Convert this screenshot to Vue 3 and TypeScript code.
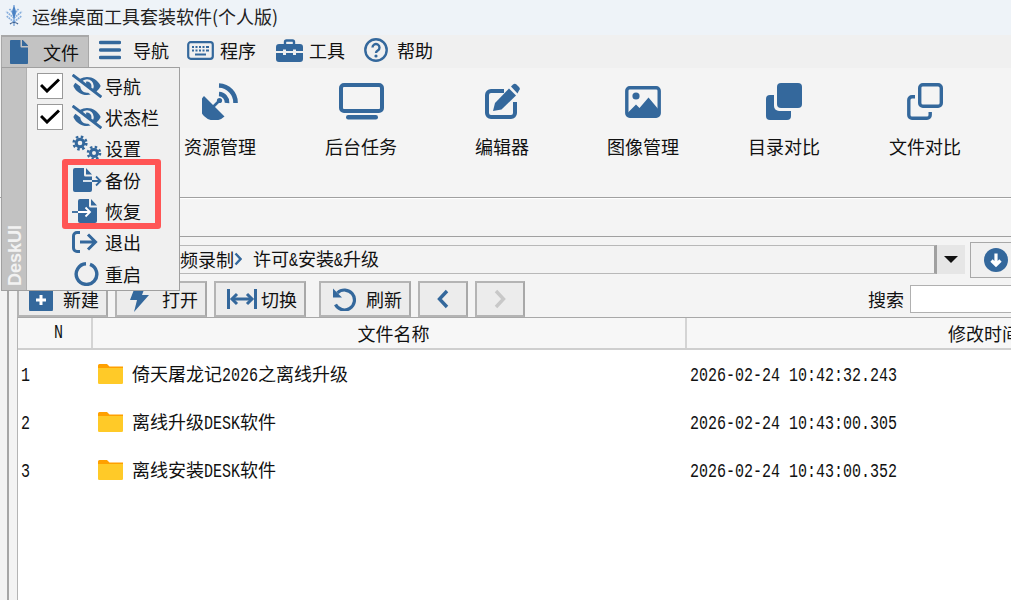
<script setup lang="ts">
const rows = [
  { n: 1, parts: [['倚天屠龙记', false], ['2026', true], ['之离线升级', false]], time: '2026-02-24 10:42:32.243' },
  { n: 2, parts: [['离线升级', false], ['DESK', true], ['软件', false]], time: '2026-02-24 10:43:00.305' },
  { n: 3, parts: [['离线安装', false], ['DESK', true], ['软件', false]], time: '2026-02-24 10:43:00.352' },
] as const
const filePath = 'M224 136V0H24C10.7 0 0 10.7 0 24v464c0 13.3 10.7 24 24 24h336c13.3 0 24-10.7 24-24V160H248c-13.2 0-24-10.8-24-24zm160-14.1v6.1H256V0h6.1c6.4 0 12.5 2.5 17 7l97.9 98c4.5 4.5 7 10.6 7 16.9z'
const eyePath = 'M320 400c-75.85 0-137.25-58.71-142.9-133.11L72.2 185.82c-13.79 17.3-26.48 35.59-36.72 55.59a32.35 32.35 0 0 0 0 29.19C89.71 376.41 197.07 448 320 448c26.91 0 52.87-4 77.89-10.46L346 397.39a144.13 144.13 0 0 1-26 2.61zm313.82 58.1l-110.55-85.44a331.25 331.25 0 0 0 81.25-102.07 32.35 32.35 0 0 0 0-29.19C550.29 135.59 442.93 64 320 64a308.15 308.15 0 0 0-147.32 37.7L45.46 3.37A16 16 0 0 0 23 6.18L3.37 31.45A16 16 0 0 0 6.18 53.9l588.36 454.73a16 16 0 0 0 22.46-2.81l19.64-25.27a16 16 0 0 0-2.82-22.45zm-183.72-142l-39.3-30.38A94.75 94.75 0 0 0 416 256a94.76 94.76 0 0 0-121.31-92.21A47.65 47.65 0 0 1 304 192a46.64 46.64 0 0 1-1.54 10l-73.61-56.89A142.31 142.31 0 0 1 320 112a143.92 143.92 0 0 1 144 144c0 21.63-5.29 41.79-13.9 60.11z'
const smallFile = 'M1 3a2 2 0 0 1 2-2h9v7a1.5 1.5 0 0 0 1.5 1.5H20V23a2 2 0 0 1-2 2H3a2 2 0 0 1-2-2zM14 1l6 6.5h-6z'
</script>

<template>
  <div class="app">
    <header class="titlebar">
      <svg class="logo" width="18" height="22" viewBox="0 0 18 22">
        <g stroke="#86aedd" stroke-width="1.7" fill="none" stroke-dasharray="1.8 .7">
          <path d="M9 17L1.500 11M9 17L16.500 11M9 13L1 6.500M9 13L17 6.500M9 9L4 3.500M9 9L14 3.500" />
        </g>
        <path d="M9 0V21" stroke="#5b8fcf" stroke-width="1.100" />
        <path d="M9 1C11 5 12 8 9 13C6 8 7 5 9 1Z" fill="#4a82c4" />
        <path d="M5 19C7 17 11 17 13 19" stroke="#3c5f8e" stroke-width="1.200" fill="none" />
      </svg>
      <span>运维桌面工具套装软件(个人版)</span>
    </header>

    <nav class="menubar">
      <div class="menu-file">
        <svg width="18" height="24" viewBox="0 0 384 512"><path :d="filePath" /></svg>
        <span>文件</span>
      </div>
      <div class="menu-item wide">
        <svg width="22" height="20" viewBox="0 0 22 20"><path d="M1.5 2.5H20.5M1.5 10H20.5M1.5 17.5H20.5" stroke-width="3.4" stroke-linecap="round" class="line" /></svg>
        <span>导航</span>
      </div>
      <div class="menu-item kbd">
        <svg width="27" height="19" viewBox="0 0 27 19">
          <rect x="1.2" y="1.2" width="24.6" height="16.6" rx="2.5" class="line" stroke-width="2.2" />
          <path d="M5 6H7M8.5 6H10.5M12 6H14M15.5 6H17.500M19 6H22M5 9.500H7M8.500 9.500H10.500M12 9.500H14M15.500 9.500H17.500M19 9.500H22M8 13.500H19" class="line" stroke-width="1.800" />
        </svg>
        <span>程序</span>
      </div>
      <div class="menu-item box">
        <svg width="27" height="23" viewBox="0 0 27 23">
          <path d="M9 5V3a1.500 1.500 0 0 1 1.500-1.500h6A1.500 1.500 0 0 1 18 3v2" class="line" stroke-width="2.400" />
          <path d="M0 8a3 3 0 0 1 3-3h21a3 3 0 0 1 3 3v4h-7v-1.500h-3V12h-7v-1.500H7V12H0z" />
          <path d="M0 14h7v2h3v-2h7v2h3v-2h7v6a3 3 0 0 1-3 3H3a3 3 0 0 1-3-3z" />
        </svg>
        <span>工具</span>
      </div>
      <div class="menu-item help">
        <svg width="24" height="24" viewBox="0 0 24 24">
          <circle cx="12" cy="12" r="10.700" class="line" stroke-width="2.400" />
          <path d="M8.500 9.500a3.500 3.500 0 1 1 5.300 3c-1.300.8-1.800 1.300-1.800 2.500" class="line" stroke-width="2.400" />
          <circle cx="12" cy="18" r="1.600" />
        </svg>
        <span>帮助</span>
      </div>
    </nav>

    <section class="ribbon">
      <div class="tool">
        <div class="tool-icon">
          <svg width="36" height="37" viewBox="0 0 36 37">
            <path d="M2 13L22.500 33.500A14.500 14.500 0 0 1 2 13Z" />
            <path d="M11 24L17 18" class="line" stroke-width="2.600" />
            <circle cx="17.500" cy="17.500" r="2.600" />
            <path d="M17 2.500A17 17 0 0 1 33.500 20M17 11A8.500 8.500 0 0 1 25 20" class="line" stroke-width="4.600" />
          </svg>
        </div>
        <span>资源管理</span>
      </div>
      <div class="tool">
        <div class="tool-icon">
          <svg width="45" height="37" viewBox="0 0 45 37">
            <rect x="2" y="2" width="41" height="26" rx="3" class="line" stroke-width="4" />
            <rect x="7" y="32" width="32" height="4.500" rx="2.200" />
          </svg>
        </div>
        <span>后台任务</span>
      </div>
      <div class="tool">
        <div class="tool-icon">
          <svg width="36" height="37" viewBox="0 0 36 37">
            <path d="M20 8H7a4 4 0 0 0-4 4V30a4 4 0 0 0 4 4H27a4 4 0 0 0 4-4V19" class="line" stroke-width="4" />
            <path d="M9 28L11 20L25 5.500L32 12.500L17.500 26.500Z" />
            <path d="M27 3.500L29 1.500a2.500 2.500 0 0 1 3.500 0L35 4a2.500 2.500 0 0 1 0 3.500L33.500 10.500Z" />
          </svg>
        </div>
        <span>编辑器</span>
      </div>
      <div class="tool">
        <div class="tool-icon">
          <svg class="img-icon" width="36" height="32" viewBox="0 0 36 32">
            <rect x="1.800" y="1.800" width="32.400" height="28.400" rx="3" class="line" stroke-width="3.400" />
            <circle cx="11" cy="10" r="3.600" />
            <path d="M2.500 27L11 18.500L14.500 22L23.500 11.500L34 24V29H3Z" />
          </svg>
        </div>
        <span>图像管理</span>
      </div>
      <div class="tool">
        <div class="tool-icon">
          <svg width="36" height="37" viewBox="0 0 36 37">
            <rect x="0" y="12" width="25" height="25" rx="4" />
            <rect x="8" y="-3" width="31" height="31" rx="5" class="cut" />
            <rect x="11" y="0" width="25" height="25" rx="4" />
          </svg>
        </div>
        <span>目录对比</span>
      </div>
      <div class="tool">
        <div class="tool-icon">
          <svg width="36" height="37" viewBox="0 0 36 37">
            <path d="M8 13.700H5a3.200 3.200 0 0 0-3.200 3.200V32a3.200 3.200 0 0 0 3.200 3.200H20a3.200 3.200 0 0 0 3.200-3.200V29" class="line" stroke-width="3.400" />
            <rect x="12.700" y="1.700" width="21.600" height="21.600" rx="3.200" class="line" stroke-width="3.400" />
          </svg>
        </div>
        <span>文件对比</span>
      </div>
    </section>

    <div class="body">
      <div class="gutter"><i class="gutter-rule"></i></div>
      <main class="main">
        <div class="tabstrip"></div>
        <div class="crumbs">
          <div class="crumb-box">
            <span>视频录制</span>
            <svg width="8" height="14" viewBox="0 0 8 14"><path d="M1.500 1.500L6.500 7L1.500 12.500" class="line" stroke-width="2.400" /></svg>
            <span class="crumb-last">许可<span class="mono amp">&amp;</span>安装<span class="mono amp">&amp;</span>升级</span>
          </div>
          <div class="crumb-drop"><b></b></div>
          <div class="crumb-go">
            <svg width="24" height="24" viewBox="0 0 24 24">
              <circle cx="12" cy="12" r="12" />
              <path d="M12 5.500V17M7.500 12.500L12 17L16.500 12.500" stroke="#fff" stroke-width="3.200" fill="none" />
            </svg>
          </div>
        </div>
        <div class="actions">
          <button class="btn b-new" type="button">
            <svg width="24" height="24" viewBox="0 0 24 24">
              <rect width="24" height="24" y="1" rx="3" />
              <path d="M12 8V18M7 13H17" stroke="#fff" stroke-width="3" />
            </svg>
            <span>新建</span>
          </button>
          <button class="btn b-open" type="button">
            <svg width="19" height="25" viewBox="0 0 19 25"><path d="M5 0H15L12 8H19L4 25L7 13H0Z" /></svg>
            <span>打开</span>
          </button>
          <button class="btn b-switch" type="button">
            <svg width="30" height="20" viewBox="0 0 30 20">
              <path d="M1.500 0V20M28.500 0V20M5 10H25" class="line" stroke-width="3" />
              <path d="M10 5L5 10L10 15M20 5L25 10L20 15" class="line" stroke-width="3" />
            </svg>
            <span>切换</span>
          </button>
          <button class="btn b-refresh" type="button">
            <svg width="24" height="24" viewBox="0 0 24 24">
              <path d="M5.500 5.800A10 10 0 1 1 3.500 17.500" class="line" stroke-width="3.200" />
              <path d="M1 1.500V10.500H10Z" />
            </svg>
            <span>刷新</span>
          </button>
          <button class="btn b-nav" type="button">
            <svg width="12" height="20" viewBox="0 0 12 20"><path d="M10 2L2.500 10L10 18" class="line" stroke-width="3.400" /></svg>
          </button>
          <button class="btn b-nav" type="button">
            <svg width="12" height="20" viewBox="0 0 12 20"><path d="M2 2L9.500 10L2 18" fill="none" stroke="#c8c8c8" stroke-width="3.400" /></svg>
          </button>
          <div class="search">
            <label for="q">搜索</label>
            <input id="q" type="text" />
          </div>
        </div>
        <div class="table">
          <div class="thead">
            <div class="th c-n"><span class="mono">N</span></div>
            <div class="th c-name">文件名称</div>
            <div class="th c-time">修改时间</div>
          </div>
          <div v-for="r in rows" :key="r.n" class="tr">
            <div class="td c-n-cell"><span class="mono">{{ r.n }}</span></div>
            <div class="td c-name-cell">
              <svg width="25" height="20" viewBox="0 0 25 20">
                <path d="M0 1.500a1.500 1.500 0 0 1 1.500-1.500H9l2.500 2.500H25V6H0Z" fill="#ffa000" />
                <path d="M0 4H25V18.700a1.300 1.300 0 0 1-1.300 1.300H1.300A1.300 1.300 0 0 1 0 18.700Z" fill="#ffca28" />
              </svg>
              <span class="fname"><template v-for="(p, i) in r.parts" :key="i"><span v-if="p[1]" class="mono run">{{ p[0] }}</span><template v-else>{{ p[0] }}</template></template></span>
            </div>
            <div class="td c-time-cell"><span class="mono">{{ r.time }}</span></div>
          </div>
        </div>
      </main>
    </div>

    <aside class="popup">
      <div class="strip"><span>DeskUI</span></div>
      <ul class="popup-list">
        <li>
          <span class="check"><svg width="20" height="15" viewBox="0 0 20 15"><path d="M1 7L7 13L19 1.500" fill="none" stroke="#000" stroke-width="3" /></svg></span>
          <svg class="pi" width="30" height="24" viewBox="0 0 640 512"><path :d="eyePath" /></svg>
          <span>导航</span>
        </li>
        <li>
          <span class="check"><svg width="20" height="15" viewBox="0 0 20 15"><path d="M1 7L7 13L19 1.500" fill="none" stroke="#000" stroke-width="3" /></svg></span>
          <svg class="pi" width="30" height="24" viewBox="0 0 640 512"><path :d="eyePath" /></svg>
          <span>状态栏</span>
        </li>
        <li>
          <span class="check none"></span>
          <svg class="pi" width="30" height="26" viewBox="0 0 30 26">
            <circle cx="8" cy="8" r="3.800" class="line" stroke-width="3" />
            <circle cx="8" cy="8" r="6.300" class="line" stroke-width="2.600" stroke-dasharray="2.500 2.450" />
            <circle cx="22" cy="18" r="3.500" class="line" stroke-width="3" />
            <circle cx="22" cy="18" r="6" class="line" stroke-width="2.600" stroke-dasharray="2.400 2.310" />
          </svg>
          <span>设置</span>
        </li>
        <li>
          <span class="check none"></span>
          <svg class="pi" width="30" height="26" viewBox="0 0 30 26">
            <path :d="smallFile" />
            <path d="M11 14H22" stroke="#fff" stroke-width="1.600" />
            <path d="M20 14H28M24 9.500L28.500 14L24 18.500" class="line" stroke-width="1.800" />
          </svg>
          <span>备份</span>
        </li>
        <li>
          <span class="check none"></span>
          <svg class="pi" width="30" height="26" viewBox="0 0 30 26">
            <path :d="smallFile" transform="translate(5 0)" />
            <path d="M0 14H7" class="line" stroke-width="1.800" />
            <path d="M6 14H18M13.500 9.500L18 14L13.500 18.500" stroke="#fff" stroke-width="1.800" fill="none" />
          </svg>
          <span>恢复</span>
        </li>
        <li>
          <span class="check none"></span>
          <svg class="pi" width="30" height="22" viewBox="0 0 30 22">
            <path d="M8 1.500H5a3.500 3.500 0 0 0-3.500 3.500V17A3.500 3.500 0 0 0 5 20.500H8" class="line" stroke-width="3" />
            <path d="M8 11H23M16 3.500L23.500 11L16 18.500" class="line" stroke-width="3" />
          </svg>
          <span>退出</span>
        </li>
        <li>
          <span class="check none"></span>
          <svg class="pi" width="30" height="24" viewBox="0 0 30 24">
            <path d="M14 1.800A10.300 10.300 0 1 0 18 2.400" class="line" stroke-width="3.400" />
          </svg>
          <span>重启</span>
        </li>
      </ul>
      <div class="highlight"></div>
    </aside>
  </div>
</template>

<style>
html, body { margin: 0; background: #fff; overflow: hidden; }
</style>

<style scoped>
.app {
  position: relative;
  width: 1011px;
  height: 600px;
  overflow: hidden;
  display: flex;
  flex-direction: column;
  font-family: "Noto Sans CJK SC", "Noto Sans", sans-serif;
  font-size: 18px;
  line-height: 24px;
  color: #111;
  background: #fff;
}
svg { display: block; flex: none; fill: #34689c; }
.line { fill: none; stroke: #34689c; }
.cut { fill: #f4f4f4; }
.mono {
  display: inline-block;
  font-family: "Liberation Mono", monospace;
  font-size: 20px;
  line-height: 24px;
  white-space: pre;
  transform: scaleX(0.75);
  transform-origin: 0 50%;
}
.mono.run { margin-right: -12px; }
.mono.amp { margin-right: -3px; }

.titlebar {
  height: 35px;
  flex: none;
  display: flex;
  align-items: center;
  padding: 0 0 4px 5px;
  gap: 9px;
  background: #eef3f8;
  box-sizing: border-box;
  color: #222;
}

.menubar {
  height: 33px;
  flex: none;
  display: flex;
  align-items: stretch;
  background: #f0f0f0;
}
.menu-file {
  margin-left: 1px;
  width: 88px;
  box-sizing: border-box;
  display: flex;
  align-items: center;
  gap: 15px;
  padding: 0 0 2px 8px;
  background: #c3c3c3;
  border-top: 2px solid #a8a8a8;
  border-left: 1px solid #a8a8a8;
  border-right: 1px solid #a8a8a8;
}
.menu-item { display: flex; align-items: center; gap: 6px; margin-left: 19px; padding-bottom: 3px; }
.menu-item.wide { gap: 12px; margin-left: 10px; }
.menu-item.kbd { margin-left: 18px; }
.menu-item.box { margin-left: 20px; }
.menu-item.help { gap: 9px; }

.ribbon {
  height: 130px;
  flex: none;
  box-sizing: border-box;
  display: flex;
  padding-left: 149.500px;
  background: #f4f4f4;
  border-bottom: 1px solid #a0a0a0;
}
.tool {
  width: 141px;
  display: flex;
  flex-direction: column;
  align-items: center;
}
.tool-icon {
  height: 66px;
  padding-top: 15px;
  box-sizing: border-box;
  display: flex;
  align-items: center;
  justify-content: flex-start;
  flex-direction: column;
}
.img-icon { margin-top: 3px; }

.body { flex: 1; display: flex; min-height: 0; }
.gutter { width: 17px; flex: none; background: #f3f3f3; position: relative; }
.gutter-rule { display: block; margin-left: 7px; width: 2px; height: 100%; background: #a6a6a6; }
.main { flex: 1; min-width: 0; display: flex; flex-direction: column; background: #f4f4f4; }
.tabstrip {
  height: 39px;
  flex: none;
  box-sizing: border-box;
  border-top: 1px solid #fff;
  border-bottom: 1px solid #a0a0a0;
  background: #f4f4f4;
}
.crumbs { height: 42px; flex: none; display: flex; align-items: flex-start; }
.crumb-box {
  margin-top: 8px;
  width: 920px;
  flex: none;
  height: 29px;
  box-sizing: border-box;
  display: flex;
  align-items: center;
  padding: 0 0 1px 145px;
  border-top: 1px solid #b8b8b8;
  border-bottom: 1px solid #b8b8b8;
  border-right: 3px solid #a0a0a0;
  background: #f3f3f3;
}
.crumb-last { margin-left: 11px; white-space: nowrap; }
.crumb-drop {
  margin-top: 8px;
  width: 28px;
  flex: none;
  height: 29px;
  display: flex;
  align-items: center;
  justify-content: center;
  background: #e6e6e6;
}
.crumb-drop b {
  display: block;
  width: 0;
  height: 0;
  border-left: 7px solid transparent;
  border-right: 7px solid transparent;
  border-top: 7px solid #111;
}
.crumb-go {
  margin: 5px 0 0 5px;
  width: 60px;
  flex: none;
  height: 36px;
  box-sizing: border-box;
  padding: 5px 0 0 13px;
  border: 1px solid #a8a8a8;
  background: #f0f0f0;
}

.actions {
  height: 38px;
  flex: none;
  display: flex;
  align-items: flex-end;
  gap: 7px;
}
.btn {
  height: 36px;
  box-sizing: border-box;
  display: flex;
  align-items: center;
  padding: 0;
  font: inherit;
  color: inherit;
  background: #ececec;
  border: 2px solid #b4b4b4;
  border-right-color: #a8a8a8;
}
.b-new { width: 91px; padding-left: 10px; gap: 10px; }
.b-open { width: 92px; padding-left: 13px; gap: 13px; }
.b-switch { width: 92px; padding-left: 11px; gap: 4px; }
.b-refresh { width: 92px; padding-left: 11px; gap: 10px; margin-left: 6px; }
.b-nav { width: 50px; justify-content: center; }
.search {
  margin-left: auto;
  margin-right: -4px;
  display: flex;
  align-items: center;
  gap: 6px;
  height: 38px;
  padding-top: 2px;
  box-sizing: border-box;
}
.search input {
  width: 105px;
  height: 28px;
  box-sizing: border-box;
  padding: 0;
  background: #fff;
  border: 1px solid #b0b0b0;
  outline: none;
}

.table {
  flex: 1;
  background: #fff;
  border-top: 1px solid #a8a8a8;
  border-left: 1px solid #b4b4b4;
  overflow: hidden;
}
.thead {
  display: flex;
  height: 32px;
  width: 1280px;
  box-sizing: border-box;
  background: #f7f7f7;
  border-bottom: 2px solid #cfcfcf;
}
.th { display: flex; align-items: center; justify-content: center; box-sizing: border-box; border-right: 2px solid #d4d4d4; }
.c-n { width: 75px; padding-left: 11px; }
.c-name { width: 594px; padding-left: 9px; }
.c-time { width: 594px; border-right: none; }
.tr { display: flex; height: 48px; width: 1280px; align-items: center; }
.td { box-sizing: border-box; }
.c-n-cell { width: 75px; padding-left: 3px; }
.c-name-cell { width: 596px; display: flex; align-items: center; padding-left: 5px; gap: 9px; }
.c-time-cell { padding-left: 1px; }
.fname { white-space: nowrap; }

.popup {
  position: absolute;
  left: 1px;
  top: 67px;
  width: 179px;
  height: 224px;
  box-sizing: border-box;
  display: flex;
  background: #f0f0f0;
  border: 1px solid #a0a0a0;
}
.strip {
  width: 25px;
  flex: none;
  background: #c2c2c2;
  border-right: 1px solid #b0b0b0;
  box-sizing: border-box;
  display: flex;
  align-items: flex-end;
  justify-content: center;
  padding-left: 2px;
}
.strip span {
  writing-mode: vertical-rl;
  transform: rotate(180deg);
  font-family: "Liberation Sans", Arial, sans-serif;
  font-weight: 700;
  font-size: 18px;
  line-height: 18px;
  color: #f2f2f2;
  padding-top: 4px;
}
.popup-list {
  list-style: none;
  margin: 0;
  padding: 2px 0 0 10px;
  flex: 1;
}
.popup-list li {
  height: 31.330px;
  display: flex;
  align-items: center;
}
.check {
  width: 26px;
  height: 26px;
  flex: none;
  box-sizing: border-box;
  background: #fff;
  border: 1px solid #999;
  display: flex;
  align-items: center;
  justify-content: center;
}
.check.none { background: transparent; border: none; }
.pi { margin: 0 3px 0 9px; }
.highlight {
  position: absolute;
  left: 60px;
  top: 91px;
  width: 99px;
  height: 70px;
  box-sizing: border-box;
  border: 6px solid #ff5555;
  border-radius: 3px;
  pointer-events: none;
}
</style>
